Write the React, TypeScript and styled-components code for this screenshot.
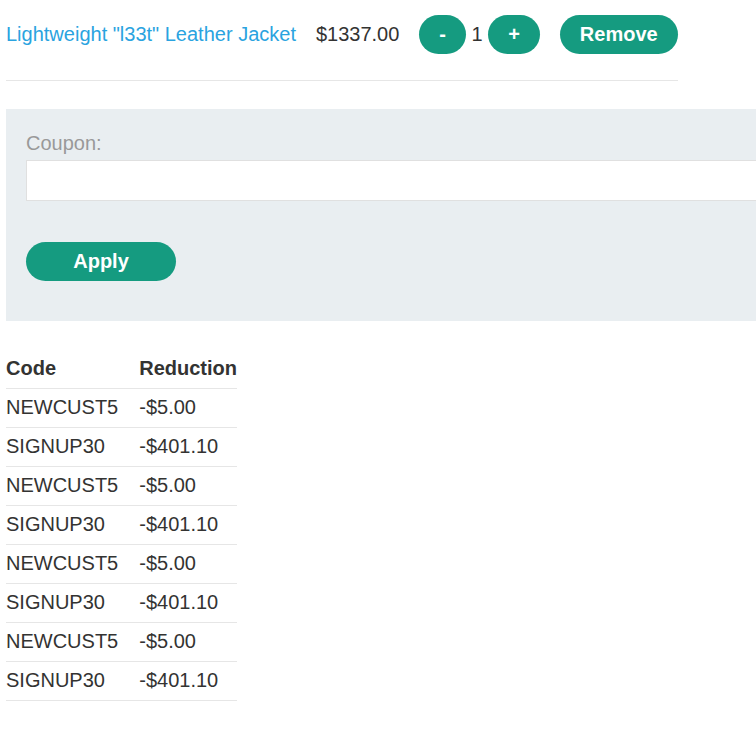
import { createGlobalStyle } from "styled-components";
import styled from "styled-components";

const GlobalStyle = createGlobalStyle`
  html, body {
    margin: 0;
    padding: 0;
    overflow: hidden;
    background: #fff;
  }
  body {
    font-family: "Liberation Sans", Arial, sans-serif;
    font-size: 20px;
    color: #333332;
  }
`;

const coupons = [
  { code: "NEWCUST5", reduction: "-$5.00" },
  { code: "SIGNUP30", reduction: "-$401.10" },
  { code: "NEWCUST5", reduction: "-$5.00" },
  { code: "SIGNUP30", reduction: "-$401.10" },
  { code: "NEWCUST5", reduction: "-$5.00" },
  { code: "SIGNUP30", reduction: "-$401.10" },
  { code: "NEWCUST5", reduction: "-$5.00" },
  { code: "SIGNUP30", reduction: "-$401.10" },
];

export default function App() {
  return (
    <Page>
      <GlobalStyle />
      <CartRow>
        <ProductLink href="#">Lightweight "l33t" Leather Jacket</ProductLink>
        <Price>$1337.00</Price>
        <Quantity>
          <PillButton>-</PillButton>
          <span>1</span>
          <PillButton>+</PillButton>
        </Quantity>
        <PillButton>Remove</PillButton>
      </CartRow>
      <Divider />
      <CouponPanel>
        <Label htmlFor="coupon">Coupon:</Label>
        <CouponInput id="coupon" />
        <PillButton wide>Apply</PillButton>
      </CouponPanel>
      <CouponTable>
        <thead>
          <tr>
            <th>Code</th>
            <th>Reduction</th>
          </tr>
        </thead>
        <tbody>
          {coupons.map((c, index) => (
            <tr key={index}>
              <td>{c.code}</td>
              <td>{c.reduction}</td>
            </tr>
          ))}
        </tbody>
      </CouponTable>
    </Page>
  );
}

const Page = styled.div`
  width: 1100px;
  padding: 15px 0 0 6px;
`;

const CartRow = styled.div`
  display: flex;
  align-items: center;
  gap: 20px;
  width: 672px;
  white-space: nowrap;
`;

const ProductLink = styled.a`
  color: #2aa3e0;
  text-decoration: none;
  line-height: 23px;
  flex-shrink: 0;
`;

const Price = styled.span`
  line-height: 23px;
`;

const Quantity = styled.div`
  display: flex;
  align-items: center;
  gap: 5.5px;
  line-height: 23px;
`;

const PillButton = styled.button<{ wide?: boolean }>`
  font-family: "Liberation Sans", Arial, sans-serif;
  font-size: 20px;
  font-weight: 700;
  line-height: 23px;
  color: #fff;
  background: #159b80;
  border: none;
  border-radius: 20px;
  padding: 8px 20px;
  min-width: ${({ wide }) => (wide ? "150px" : "0")};
  height: 39px;
  flex-shrink: 0;
  cursor: pointer;
`;

const Divider = styled.hr`
  width: 672px;
  margin: 26px 0 28px;
  border: none;
  border-top: 1px solid #e6e6e6;
`;

const CouponPanel = styled.form`
  display: flex;
  flex-direction: column;
  align-items: flex-start;
  background: #e9eef1;
  padding: 23px 0 40px 20px;
`;

const Label = styled.label`
  color: #999;
  line-height: 23px;
  margin-bottom: 5px;
`;

const CouponInput = styled.input`
  box-sizing: border-box;
  width: 100%;
  height: 41px;
  border: 1px solid #e0e0e0;
  background: #fff;
  margin: 0 0 41px;
  font-size: 20px;
`;

const CouponTable = styled.table`
  border-collapse: collapse;
  margin-top: 29px;

  th,
  td {
    text-align: left;
    line-height: 23px;
    padding: 7px 0 8px;
    border-bottom: 1px solid #e6e6e6;
  }
  th {
    font-weight: 700;
  }
  th:first-child,
  td:first-child {
    padding-right: 21px;
  }
`;
